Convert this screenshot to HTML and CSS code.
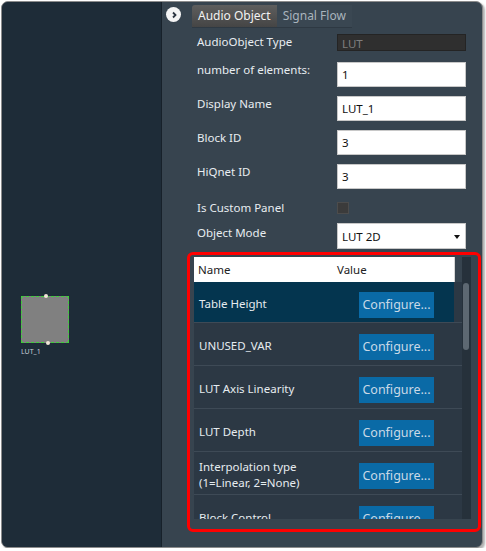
FILE: index.html
```html
<!DOCTYPE html>
<html lang="en">
<head>
    <meta charset="UTF-8">
    <title>Audio Object</title>
    <link rel="stylesheet" href="styles.css">
</head>
<body>
    <div class="window">
        <div class="canvas">
            <div class="node">
                <div class="node-box">
                    <span class="pin pin-top"></span>
                    <span class="pin pin-bottom"></span>
                </div>
                <div class="node-label">LUT_1</div>
            </div>
        </div>

        <div class="panel">
            <div class="tabbar">
                <button class="collapse">
                    <svg width="8" height="8" viewBox="0 0 8 8"><path d="M3 1.5 L5.5 4 L3 6.5" fill="none" stroke="#2b3440" stroke-width="1.8"/></svg>
                </button>
                <div class="tabs">
                    <div class="tab active">Audio Object</div>
                    <div class="tab">Signal Flow</div>
                </div>
            </div>

            <div class="form">
                <div class="row r-type">
                    <label>AudioObject Type</label>
                    <div class="field readonly">LUT</div>
                </div>
                <div class="row r-count">
                    <label>number of elements:</label>
                    <div class="field">1</div>
                </div>
                <div class="row r-name">
                    <label>Display Name</label>
                    <div class="field">LUT_1</div>
                </div>
                <div class="row r-block">
                    <label>Block ID</label>
                    <div class="field">3</div>
                </div>
                <div class="row r-hiq">
                    <label>HiQnet ID</label>
                    <div class="field">3</div>
                </div>
                <div class="row r-custom">
                    <label>Is Custom Panel</label>
                    <div class="checkbox"></div>
                </div>
                <div class="row r-mode">
                    <label>Object Mode</label>
                    <div class="field select">LUT 2D<span class="caret"></span></div>
                </div>
            </div>

            <div class="highlight">
                <div class="grid">
                    <div class="grid-body">
                        <div class="grid-head">
                            <div class="col-name">Name</div>
                            <div class="col-value">Value</div>
                        </div>
                        <div class="grid-rows">
                            <div class="grid-row first selected">
                                <div class="col-name">Table Height</div>
                                <div class="col-value"><button class="configure">Configure...</button></div>
                            </div>
                            <div class="grid-row">
                                <div class="col-name">UNUSED_VAR</div>
                                <div class="col-value"><button class="configure">Configure...</button></div>
                            </div>
                            <div class="grid-row">
                                <div class="col-name">LUT Axis Linearity</div>
                                <div class="col-value"><button class="configure">Configure...</button></div>
                            </div>
                            <div class="grid-row">
                                <div class="col-name">LUT Depth</div>
                                <div class="col-value"><button class="configure">Configure...</button></div>
                            </div>
                            <div class="grid-row">
                                <div class="col-name">Interpolation type<br>(1=Linear, 2=None)</div>
                                <div class="col-value"><button class="configure">Configure...</button></div>
                            </div>
                            <div class="grid-row">
                                <div class="col-name">Block Control</div>
                                <div class="col-value"><button class="configure">Configure...</button></div>
                            </div>
                        </div>
                    </div>
                    <div class="scrollbar">
                        <div class="thumb"></div>
                    </div>
                </div>
            </div>
        </div>
    </div>
</body>
</html>
```

FILE: styles.css
```css
body {
    margin: 0;
    background: #ffffff;
    font-family: 'Noto Sans', 'Open Sans', sans-serif;
    font-size: 11.5px;
}
.window {
    display: flex;
    margin: 1px 0 0 1px;
    width: 480px;
    height: 545px;
    border: 1px solid #8c8c8c;
    border-radius: 7px;
    overflow: hidden;
    box-shadow: 2px 2px 2px rgba(0,0,0,0.3);
    background: #37444f;
}

/* left design canvas */
.canvas {
    width: 159px;
    flex-shrink: 0;
    background: #1e2c38;
    border-right: 1px solid #17212a;
    position: relative;
}
.node {
    position: absolute;
    left: 19px;
    top: 294px;
}
.node-box {
    width: 46px;
    height: 45px;
    background: #808080;
    border: 1px dashed #3fcf3a;
    position: relative;
}
.pin {
    position: absolute;
    width: 4px;
    height: 4px;
    border-radius: 50%;
    background: #f2e6d8;
}
.pin-top { left: 22px; top: -3px; }
.pin-bottom { left: 24px; bottom: -3px; }
.node-label {
    font-size: 7px;
    color: #c3cdd6;
    margin-top: 4px;
}

/* right property panel */
.panel {
    flex: 1;
    display: flex;
    flex-direction: column;
}
.tabbar {
    display: flex;
    align-items: flex-start;
    padding: 3px 0 0 4px;
}
.collapse {
    width: 15px;
    height: 15px;
    margin-top: 2px;
    padding: 0;
    border: none;
    border-radius: 50%;
    background: #f4f4f4;
    display: flex;
    align-items: center;
    justify-content: center;
}
.tabs {
    display: flex;
    margin-left: 11px;
    border-bottom: 1px solid #2e3943;
}
.tab {
    height: 22px;
    line-height: 21px;
    padding: 0 6px 0 6px;
    color: #a9b4bd;
    background: #3a4752;
    font-size: 12px;
}
.tab.active {
    color: #f2f2f2;
    background: linear-gradient(to bottom, #5e5e5e, #454545);
    border-radius: 3px 0 0 0;
}

.form {
    padding-left: 35px;
    display: flex;
    flex-direction: column;
}
.row {
    display: flex;
    align-items: flex-start;
}
.row label {
    width: 140px;
    color: #e8edf1;
    line-height: 16px;
}
.field {
    width: 123px;
    height: 23px;
    line-height: 23px;
    padding-left: 4px;
    background: #ffffff;
    border: 1px solid #c8c8c8;
    color: #111;
    position: relative;
}
.field.readonly {
    height: 15px;
    line-height: 17px;
    background: #2f2f2f;
    border-color: #242424;
    color: #7e7e7e;
}
.select { height: 24px; line-height: 25px; }
.caret {
    position: absolute;
    right: 5px;
    top: 11px;
    border-left: 3.5px solid transparent;
    border-right: 3.5px solid transparent;
    border-top: 4px solid #111;
}
.checkbox {
    width: 10px;
    height: 10px;
    background: #3b3b3b;
    border: 1px solid #4c4c4c;
}
.r-type { margin-top: 6px; }
.r-count { margin-top: 11px; }
.r-name { margin-top: 9px; }
.r-block { margin-top: 9px; }
.r-hiq { margin-top: 9px; }
.r-custom { margin-top: 11px; align-items: center; }
.r-mode { margin-top: 7px; }
.r-mode label { margin-top: 2px; }

/* parameter grid */
.highlight {
    margin: 3px 0 0 25px;
    width: 284px;
    height: 272px;
    border: 3px solid #ff0000;
    border-radius: 6px;
    padding: 2px 0 0 4px;
}
.grid {
    display: flex;
    width: 277px;
    height: 262px;
    overflow: hidden;
}
.grid-body {
    flex: 1;
    overflow: hidden;
}
.grid-head {
    display: flex;
    height: 25px;
    line-height: 25px;
    background: #ffffff;
    color: #222;
    border-right: 1px solid #d6d6d6;
    margin-right: 7px;
}
.grid-head .col-name { width: 139px; padding-left: 4px; }
.grid-rows {
    background: #2c3844;
}
.grid-row {
    display: flex;
    align-items: center;
    height: 42px;
    border-bottom: 1px solid #3e4a56;
    color: #e6ecf0;
}
.grid-row.first { height: 40px; }
.grid-row.selected {
    background: linear-gradient(to right, #04354f 260px, #2c3844 260px);
}
.grid-row .col-name {
    width: 160px;
    padding: 3px 0 0 5px;
    line-height: 16px;
}
.configure {
    margin-top: 5px;
    width: 75px;
    height: 26px;
    padding: 0;
    border: none;
    background: #0a6aa6;
    color: #c9d9e6;
    font-family: inherit;
    font-size: 12.5px;
}
.scrollbar {
    width: 9px;
    background: #26313b;
    padding-top: 26px;
}
.thumb {
    width: 6px;
    height: 67px;
    margin-left: 1px;
    border-radius: 3px;
    background: #5d6872;
}
```
